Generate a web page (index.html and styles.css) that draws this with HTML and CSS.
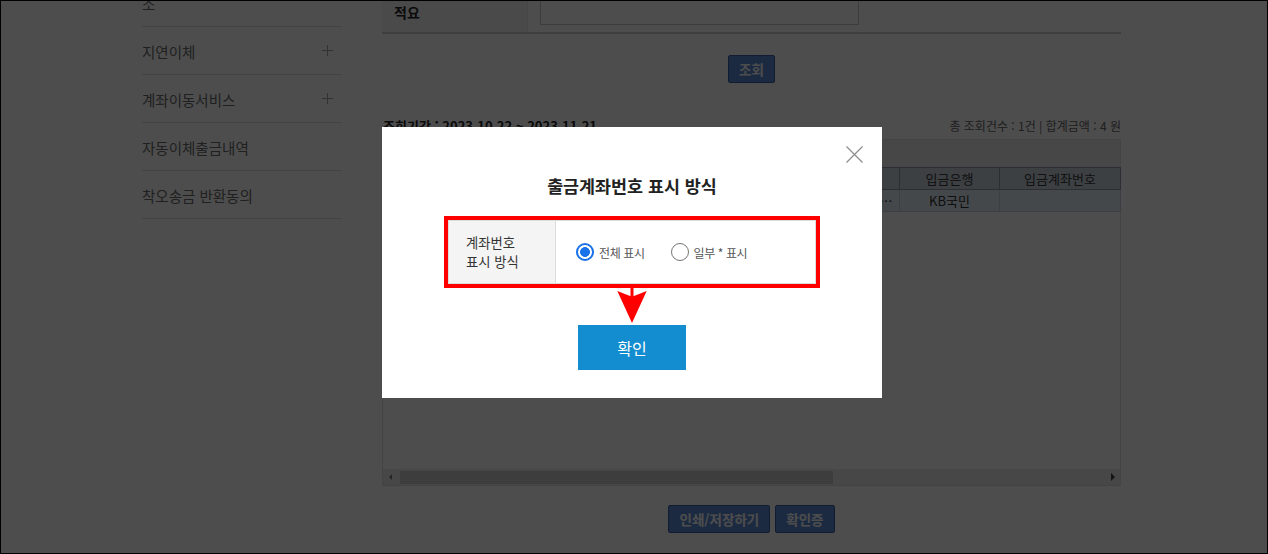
FILE: index.html
```html
<!DOCTYPE html>
<html lang="ko">
<head>
<meta charset="utf-8">
<title>자동이체출금내역</title>
<link rel="stylesheet" href="styles.css">
</head>
<body>
<div class="page">
  <nav class="side">
    <ul class="side-menu">
      <li class="side-item"><span class="side-label">자동이체 등록/변경/취<br>소</span></li>
      <li class="side-item"><span class="side-label">지연이체</span><span class="plus"></span></li>
      <li class="side-item"><span class="side-label">계좌이동서비스</span><span class="plus"></span></li>
      <li class="side-item"><span class="side-label">자동이체출금내역</span></li>
      <li class="side-item"><span class="side-label">착오송금 반환동의</span></li>
    </ul>
  </nav>

  <main class="main">
    <div class="search-table">
      <div class="search-th">적요</div>
      <div class="search-td"><span class="search-input"></span></div>
    </div>

    <div class="btn-row btn-row-search">
      <button class="btn-navy" type="button">조회</button>
    </div>

    <div class="info-row">
      <span class="info-period">조회기간 : 2023.10.22 ~ 2023.11.21</span>
      <span class="info-total">총 조회건수 : 1건 | 합계금액 : 4 원</span>
    </div>

    <div class="grid">
      <div class="grid-toolbar"></div>
      <table class="grid-table">
        <colgroup>
          <col class="c-no"><col class="c-date"><col class="c-acct"><col class="c-amt"><col class="c-memo"><col class="c-bank"><col class="c-inacct">
        </colgroup>
        <thead>
          <tr><th>순번</th><th>출금일자</th><th>출금계좌번호</th><th>출금금액</th><th>받는분 / 메모</th><th>입금은행</th><th>입금계좌번호</th></tr>
        </thead>
        <tbody>
          <tr class="selected"><td>1</td><td>2023.11.20</td><td>123-456-789012</td><td>4</td><td class="ellipsis">자동이체 출금 내역 메모 표시 텍스트</td><td>KB국민</td><td></td></tr>
        </tbody>
      </table>
      <div class="grid-body"></div>
      <div class="hscroll">
        <span class="arrow-left"></span>
        <span class="thumb"></span>
        <span class="track"></span>
        <span class="arrow-right"></span>
      </div>
    </div>

    <div class="btn-row btn-row-bottom">
      <button class="btn-navy" type="button">인쇄/저장하기</button>
      <button class="btn-navy" type="button">확인증</button>
    </div>
  </main>
</div>

<div class="dim"></div>

<div class="modal" role="dialog" aria-labelledby="modalTitle">
  <button class="modal-close" type="button" aria-label="닫기">
    <svg width="17" height="17" viewBox="0 0 17 17"><path d="M0.5 0.5 L16.5 16.5 M16.5 0.5 L0.5 16.5" stroke="#8c8c8c" stroke-width="1.2" fill="none"/></svg>
  </button>
  <h2 class="modal-title" id="modalTitle">출금계좌번호 표시 방식</h2>
  <div class="choice-box">
    <div class="choice-table">
      <div class="choice-th">계좌번호<br>표시 방식</div>
      <div class="choice-td">
        <label class="radio-opt"><span class="radio checked"></span>전체 표시</label>
        <label class="radio-opt"><span class="radio"></span>일부 * 표시</label>
      </div>
    </div>
  </div>
  <svg class="down-arrow" width="30" height="37" viewBox="0 0 30 37">
    <rect x="13.5" y="0" width="3" height="9" fill="#ff0000"/>
    <polygon points="0.3,3 15,8.7 29.7,3 15,35" fill="#ff0000"/>
  </svg>
  <button class="btn-confirm" type="button">확인</button>
</div>
</body>
</html>
```

FILE: styles.css
```css
* { box-sizing: border-box; }

html, body { height: 100%; overflow: hidden; }

body {
  margin: 0;
  background: #fff;
  color: #333;
  font-family: "Noto Sans CJK KR", "Noto Sans", sans-serif;
  font-size: 13px;
}

.page {
  display: flex;
  gap: 40px;
  padding-left: 142px;
}

/* ---------- sidebar ---------- */
.side {
  flex: none;
  width: 200px;
  margin-top: -41px;
}
.side-menu { list-style: none; margin: 0; padding: 0; }
.side-item {
  display: flex;
  align-items: center;
  justify-content: space-between;
  padding: 15px 9px 12px 0;
  line-height: 20px;
  font-size: 14.5px;
  color: #6a6a6a;
  border-bottom: 1px solid #dcdcdc;
}
.plus {
  position: relative;
  width: 11px;
  height: 11px;
  margin-top: -3px;
}
.plus::before, .plus::after {
  content: "";
  position: absolute;
  background: #a8a8a8;
}
.plus::before { left: 5px; top: 0; width: 1px; height: 11px; }
.plus::after { top: 5px; left: 0; height: 1px; width: 11px; }

/* ---------- main ---------- */
.main {
  flex: none;
  width: 739px;
  margin-top: -9px;
}
.search-table {
  display: flex;
  height: 43px;
  border-bottom: 2px solid #d2d2d2;
}
.search-th {
  width: 146px;
  display: flex;
  align-items: center;
  padding-left: 12px;
  background: #f5f5f5;
  border-right: 1px solid #e6e6e6;
  font-size: 14px;
  font-weight: bold;
  color: #222;
}
.search-td {
  flex: 1;
  display: flex;
  align-items: center;
  padding-left: 12px;
}
.search-input {
  display: block;
  width: 319px;
  height: 27px;
  border: 1px solid #c8c8c8;
  background: #fff;
}

.btn-row { display: flex; justify-content: center; gap: 5px; }
.btn-row-search { padding-top: 21px; }
.btn-row-bottom { margin-top: 19px; }
.btn-navy {
  height: 28px;
  padding: 0 10px;
  background: #5e8cd8;
  border: 1px solid #3a5f9e;
  border-radius: 2px;
  color: #fff;
  font-family: inherit;
  font-size: 13.5px;
  font-weight: bold;
  line-height: 26px;
}

.info-row {
  display: flex;
  justify-content: space-between;
  align-items: center;
  margin-top: 35px;
  height: 16px;
  line-height: 16px;
}
.info-period { font-size: 13px; font-weight: bold; color: #222; padding-left: 1px; }
.info-total { font-size: 12px; color: #666; }

/* ---------- grid ---------- */
.grid {
  display: flex;
  flex-direction: column;
  margin-top: 5px;
  height: 347px;
  border: 1px solid #e2e2e2;
}
.grid-toolbar { height: 27px; background: #ececec; flex: none; }
.grid-table {
  width: 737px;
  border-collapse: collapse;
  table-layout: fixed;
  flex: none;
}
.c-no { width: 40px; }
.c-date { width: 90px; }
.c-acct { width: 130px; }
.c-amt { width: 100px; }
.c-memo { width: 156px; }
.c-bank { width: 100px; }
.c-inacct { width: 121px; }
.grid-table th, .grid-table td {
  height: 22px;
  padding: 0 5px;
  text-align: center;
  white-space: nowrap;
  overflow: hidden;
  font-size: 13px;
  line-height: 20px;
}
.grid-table th {
  background: #c9d3de;
  border: 1px solid #8e99a6;
  color: #3a3a3a;
  font-weight: normal;
}
.grid-table td {
  border: 1px solid #c7d1dc;
  color: #333;
}
.grid-table tr.selected td { background: #e3edf8; }
.grid-table td.ellipsis { text-overflow: ellipsis; text-align: left; }
.grid-body { flex: 1; }

.hscroll {
  flex: none;
  display: flex;
  align-items: center;
  height: 16px;
  background: #ebebeb;
}
.arrow-left {
  width: 0; height: 0;
  margin: 0 8px 0 6px;
  border-top: 3.5px solid transparent;
  border-bottom: 3.5px solid transparent;
  border-right: 3.5px solid #7a7a7a;
}
.thumb { width: 433px; height: 13px; background: #c9c9c9; }
.track { flex: 1; }
.arrow-right {
  width: 0; height: 0;
  margin: 0 5px 0 6px;
  border-top: 4px solid transparent;
  border-bottom: 4px solid transparent;
  border-left: 4px solid #444;
}

/* ---------- overlay + modal ---------- */
.dim {
  position: fixed;
  inset: 0;
  background: rgba(0, 0, 0, 0.698);
  border: 1px solid #000;
  z-index: 10;
}
.modal {
  position: fixed;
  left: 382px;
  top: 127px;
  width: 500px;
  height: 271px;
  padding-top: 47px;
  background: #fff;
  text-align: center;
  z-index: 20;
}
.modal-close {
  position: absolute;
  top: 19px;
  right: 19px;
  width: 17px;
  height: 17px;
  padding: 0;
  border: 0;
  background: none;
}
.modal-close svg { display: block; }
.modal-title {
  margin: 0;
  font-size: 17.4px;
  line-height: 24px;
  font-weight: bold;
  color: #222;
}
.choice-box {
  width: 376px;
  margin: 18px auto 0;
  border: 4px solid #ff0000;
}
.choice-table {
  display: flex;
  height: 64px;
  border: 1px solid #dcdcdc;
  text-align: left;
}
.choice-th {
  width: 107px;
  display: flex;
  align-items: center;
  padding-left: 17px;
  background: #f4f4f4;
  border-right: 1px solid #dcdcdc;
  font-size: 13.3px;
  line-height: 19px;
  color: #333;
}
.choice-td {
  flex: 1;
  display: flex;
  align-items: center;
  gap: 26px;
  padding-left: 20px;
}
.radio-opt {
  display: inline-flex;
  align-items: center;
  gap: 5px;
  font-size: 12px;
  letter-spacing: -0.4px;
  color: #555;
}
.radio {
  width: 18px;
  height: 18px;
  border: 1.5px solid #767676;
  border-radius: 50%;
  background: #fff;
}
.radio.checked {
  border: 2px solid #1a73e8;
  background: radial-gradient(circle, #1a73e8 0 4.6px, #fff 5.2px);
}
.down-arrow { display: block; margin: 0 auto; }
.btn-confirm {
  display: block;
  width: 108px;
  height: 45px;
  margin: 0 auto;
  border: 0;
  background: #138dcf;
  color: #fff;
  font-family: inherit;
  font-size: 16px;
}
```
